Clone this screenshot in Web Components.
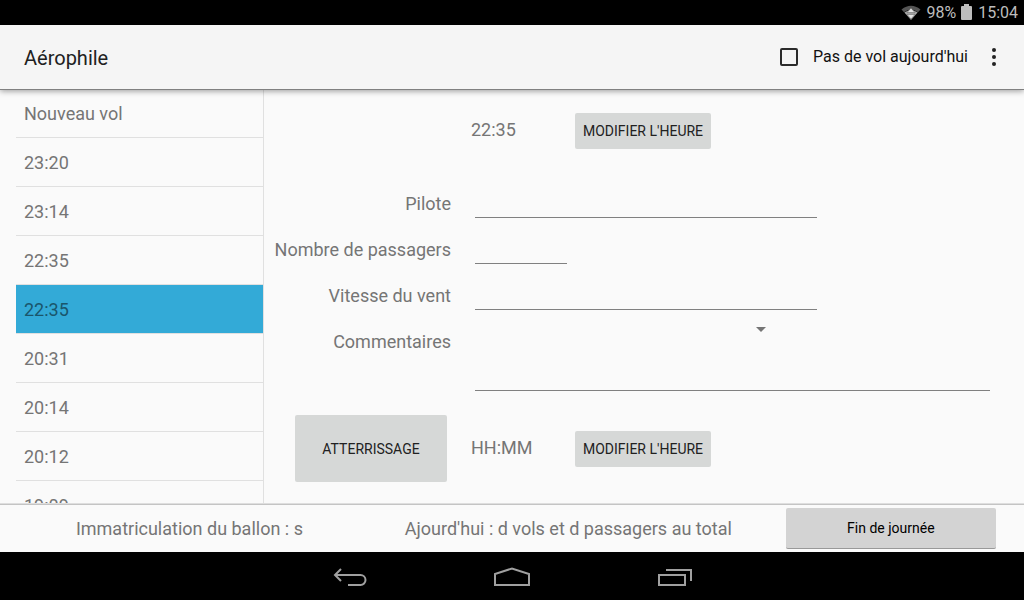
<!DOCTYPE html>
<html lang="fr">
<head>
<meta charset="utf-8">
<meta name="viewport" content="width=device-width, initial-scale=1">
<title>Aérophile</title>
<style>
  body { margin: 0; background: #fafafa; font-family: Roboto, "Noto Sans", sans-serif; font-size: 18px; color: #757575; }
</style>
</head>
<body>
<aero-app></aero-app>
<script>
const define = (name, html) => customElements.define(name, class extends HTMLElement {
  constructor() {
    super();
    const template = document.createElement('template');
    template.innerHTML = html;
    this.attachShadow({ mode: 'open' }).append(template.content.cloneNode(true));
  }
});

define('system-status', `
<style>
  :host { display: flex; align-items: center; justify-content: flex-end; height: 25px; padding-right: 6px; background: #000; color: #bdbdbd; font-size: 16px; line-height: 24px; flex: none; }
  .wifi { margin-right: 5px; }
  .battery { margin: 0 6px 2px 5px; }
  svg { display: block; }
</style>
<svg class="wifi" width="20" height="16" viewBox="0 0 20 16" aria-hidden="true">
  <path d="M0.5 4.5Q10 -3 19.5 4.5L17 7.2Q10 2 3 7.2Z" fill="#555"/>
  <path d="M3.4 7.6Q10 2.6 16.6 7.6L10 15Z" fill="#aaa"/>
  <path d="M10 3L14 7.6H6ZM10 14L6 9.4H14Z" fill="#e4e4e4" stroke="#555" stroke-width=".5"/>
</svg>
<span>98%</span>
<svg class="battery" width="11" height="16" viewBox="0 0 11 16" aria-hidden="true"><path d="M3 0H8V2H10Q11 2 11 3V15Q11 16 10 16H1Q0 16 0 15V3Q0 2 1 2H3Z" fill="#bdbdbd"/></svg>
<span>15:04</span>`);

define('app-bar', `
<style>
  :host { display: flex; align-items: center; height: 64px; padding: 0 20px 0 24px; background: #f5f5f5; border-bottom: 1px solid #808080; box-shadow: 0 1px 6px rgba(0,0,0,.4); color: #212121; flex: none; position: relative; z-index: 1; }
  h1 { margin: 0; flex: 1; font-size: 20px; line-height: 24px; padding-top: 2px; font-weight: 400; }
  label { display: flex; align-items: center; gap: 15px; font-size: 16px; line-height: 24px; color: #111; }
  input { appearance: none; box-sizing: border-box; margin: 0; width: 18px; height: 18px; border: 2px solid #2b2b2b; border-radius: 2px; }
  input:checked { background: #2b2b2b; }
  button { margin: 0 0 0 16px; border: 0; padding: 0; width: 20px; height: 40px; background: none; }
  svg { display: block; margin: auto; }
</style>
<h1><slot></slot></h1>
<label><input type="checkbox">Pas de vol aujourd'hui</label>
<button type="button" aria-label="Plus d'options"><svg width="6" height="18" viewBox="0 0 6 18" fill="#222"><circle cx="3" cy="2" r="2"/><circle cx="3" cy="9" r="2"/><circle cx="3" cy="16" r="2"/></svg></button>`);

define('flight-item', `
<style>
  :host { display: block; border-bottom: 1px solid #e0e0e0; }
  button { display: block; box-sizing: border-box; width: 100%; height: 48px; margin: 0; padding: 2px 8px 0; border: 0; background: none; font: inherit; line-height: 46px; color: #757575; text-align: left; }
  :host([selected]) button { background: #33aad7; color: #1a566c; }
</style>
<button type="button"><slot></slot></button>`);

define('flight-list', `
<style>
  :host { display: block; box-sizing: border-box; width: 264px; margin-top: -1px; padding-left: 16px; border-right: 1px solid #e0e0e0; overflow: hidden; flex: none; }
</style>
<slot></slot>`);

define('material-button', `
<style>
  :host { display: block; }
  button { display: block; width: 100%; min-height: 36px; margin: 0; padding: 0 8px; border: 0; border-radius: 2px; background: #d6d8d7; font: inherit; font-size: 14px; line-height: 20px; color: #212121; }
  :host([large]) button { min-width: 152px; min-height: 67px; }
  :host([holo]) button { min-height: 41px; background: #d3d3d3; border-bottom: 1px solid #999; color: #000; }
</style>
<button type="button"><slot></slot></button>`);

define('flight-form', `
<style>
  :host { display: block; flex: 1; min-width: 0; padding: 23px 30px 0 0; }
  form { display: grid; grid-template-columns: 187px minmax(0, 1fr); column-gap: 20px; grid-auto-rows: auto; }
  label { text-align: right; line-height: 46px; }
  .time { grid-column: 2; display: flex; align-items: center; }
  .time span { width: 104px; line-height: 24px; padding-bottom: 2px; }
  .takeoff { margin-bottom: 32px; }
  .landing { margin-top: 24px; }
  .land { margin: 24px 4px 0 0; justify-self: end; }
  input, textarea, select { box-sizing: border-box; display: block; margin: 0 4px; padding: 0; border: 0; border-radius: 0; background: none; font: inherit; color: #212121; outline: 0; }
  input, textarea { border-bottom: 1px solid #808080; }
  input { height: 37px; width: 342px; max-width: calc(100% - 8px); }
  .short { width: 92px; }
  .picker { position: relative; width: 302px; }
  select { appearance: none; width: 298px; height: 20px; }
  .picker svg { position: absolute; right: 7px; top: 8px; }
  textarea { width: calc(100% - 8px); height: 52px; resize: none; }
</style>
<form>
  <div class="time takeoff"><span>22:35</span><material-button>MODIFIER L'HEURE</material-button></div>
  <label for="pilot">Pilote</label><input id="pilot">
  <label for="count">Nombre de passagers</label><input id="count" class="short" inputmode="numeric">
  <label for="wind">Vitesse du vent</label><input id="wind">
  <label for="comments">Commentaires</label>
  <div>
    <div class="picker"><select aria-label="Commentaire type"><option></option></select><svg width="10" height="5" viewBox="0 0 10 5" aria-hidden="true"><path d="M0 0H10L5 5Z" fill="#757575"/></svg></div>
    <textarea id="comments"></textarea>
  </div>
  <material-button class="land" large>ATTERRISSAGE</material-button>
  <div class="time landing"><span>HH:MM</span><material-button>MODIFIER L'HEURE</material-button></div>
</form>`);

define('day-summary', `
<style>
  :host { display: grid; grid-template-columns: 37fr 37fr 26fr; align-items: center; height: 47px; border-top: 1px solid #c4c4c4; background: #fafafa; text-align: center; line-height: 24px; flex: none; }
  material-button { margin: 0 28px; }
</style>
<span>Immatriculation du ballon : s</span>
<span>Ajourd'hui : d vols et d passagers au total</span>
<material-button holo>Fin de journée</material-button>`);

define('system-nav', `
<style>
  :host { display: flex; justify-content: center; height: 48px; background: #000; flex: none; }
  button { width: 162px; margin: 0; padding: 0; border: 0; background: none; }
  svg { display: block; margin: auto; fill: none; stroke: #a0a0a0; stroke-width: 2; }
</style>
<button type="button" aria-label="Retour"><svg width="36" height="24" viewBox="0 0 36 24"><path d="M9 5L3 11L9 17M3 11H28.5A5 5 0 0 1 28.5 21H16"/></svg></button>
<button type="button" aria-label="Accueil"><svg width="36" height="24" viewBox="0 0 36 24"><path d="M1 21V10L18 4.5L35 10V21Z"/></svg></button>
<button type="button" aria-label="Applications récentes"><svg width="36" height="24" viewBox="0 0 36 24"><path d="M3 11H29V21H3ZM10 6H35V17"/></svg></button>`);

define('aero-app', `
<style>
  :host { display: flex; flex-direction: column; height: 100vh; }
  main { display: flex; flex: 1; min-height: 0; border-bottom: 1px solid #dedede; }
</style>
<system-status></system-status>
<app-bar>Aérophile</app-bar>
<main>
  <flight-list>
    <flight-item>Nouveau vol</flight-item>
    <flight-item>23:20</flight-item>
    <flight-item>23:14</flight-item>
    <flight-item>22:35</flight-item>
    <flight-item selected>22:35</flight-item>
    <flight-item>20:31</flight-item>
    <flight-item>20:14</flight-item>
    <flight-item>20:12</flight-item>
    <flight-item>19:09</flight-item>
  </flight-list>
  <flight-form></flight-form>
</main>
<day-summary></day-summary>
<system-nav></system-nav>`);
</script>
</body>
</html>
